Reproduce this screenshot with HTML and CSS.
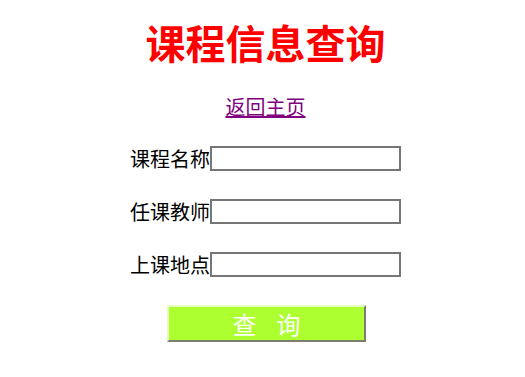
FILE: index.html
```html
<!DOCTYPE html>
<html lang="zh-CN">
<head>
<meta charset="utf-8">
<title>课程信息查询</title>
<link rel="stylesheet" href="styles.css">
</head>
<body>
<div class="page">
  <h1 class="title">课程信息查询</h1>
  <a class="home" href="#">返回主页</a>
  <form class="form">
    <div class="row"><span class="label">课程名称</span><input class="field" type="text"></div>
    <div class="row"><span class="label">任课教师</span><input class="field" type="text"></div>
    <div class="row"><span class="label">上课地点</span><input class="field" type="text"></div>
    <button class="submit" type="button"><span>查</span><span>询</span></button>
  </form>
</div>
</body>
</html>
```
FILE: styles.css
```css
html, body {
  margin: 0;
  padding: 0;
  background: #ffffff;
}
.page {
  display: flex;
  flex-direction: column;
  align-items: center;
  padding-left: 6px;
  font-family: "Noto Sans CJK SC", "Noto Sans", sans-serif;
  color: #000;
}
.title {
  margin: 22px 0 0 0;
  font-size: 40px;
  line-height: 40px;
  font-weight: 700;
  color: #ff0000;
}
.home {
  margin-top: 35px;
  font-size: 20px;
  line-height: 20px;
  color: #800080;
  text-decoration: underline;
}
.form {
  display: flex;
  flex-direction: column;
  align-items: center;
  margin: 29px 0 0 0;
}
.row {
  display: flex;
  align-items: center;
  height: 25px;
  margin-bottom: 28px;
}
.label {
  font-size: 20px;
  line-height: 25px;
  width: 80px;
}
.field {
  box-sizing: border-box;
  width: 191px;
  height: 25px;
  margin: 0;
  border: 2px solid #767676;
  background: #fff;
  padding: 0 2px;
  font-size: 16px;
}
.submit {
  box-sizing: border-box;
  display: flex;
  justify-content: center;
  align-items: center;
  gap: 20px;
  width: 199px;
  height: 37px;
  margin: 0 0 0 2px;
  padding: 0;
  background: #adff2f;
  border-style: solid;
  border-width: 2px;
  border-top-color: #e6ffc0;
  border-left-color: #e6ffc0;
  border-right-color: #7d7d70;
  border-bottom-color: #7d7d70;
  color: #ffffff;
  font-family: "Noto Sans CJK SC", "Noto Sans", sans-serif;
  font-size: 24px;
  line-height: 24px;
}
```
